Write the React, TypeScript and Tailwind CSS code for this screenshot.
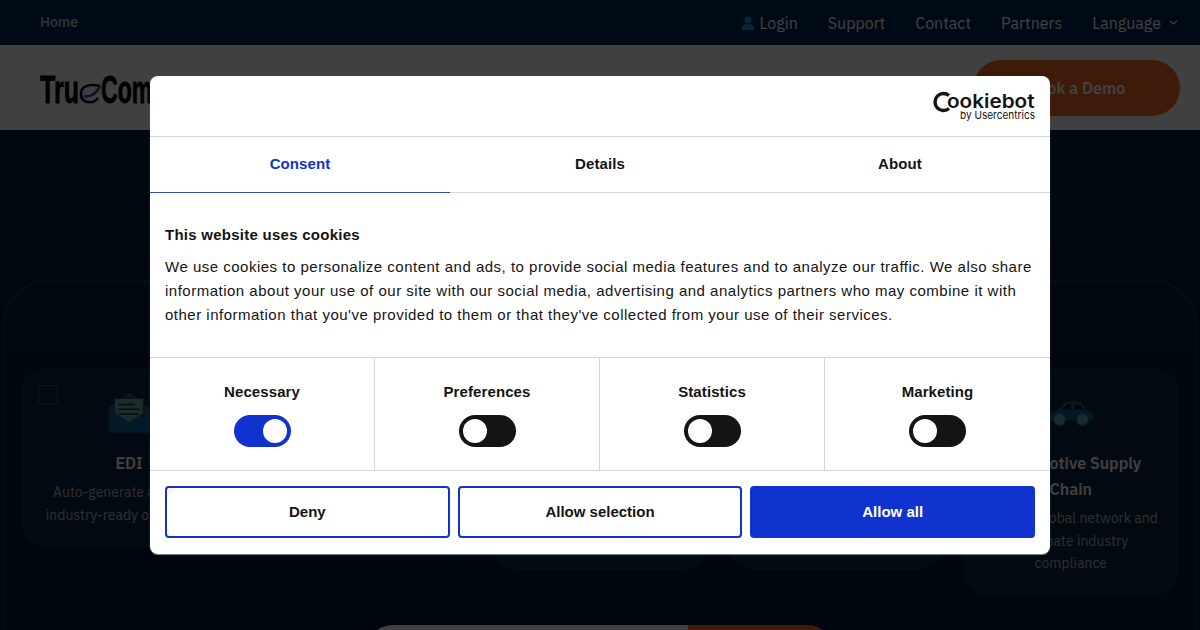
import React from 'react';
import { ChevronDown } from 'lucide-react';

const plex = "font-['IBM_Plex_Sans','Noto_Sans',sans-serif]";

const navLinks = ['Support', 'Contact', 'Partners'];

const cards = [
  {
    title: 'EDI',
    text: ['Auto-generate accurate,', 'industry-ready output files'],
    icon: 'mail',
  },
  {
    title: 'Compliance',
    text: ['Keep every trading partner', 'connected and on track'],
    icon: 'none',
  },
  {
    title: 'Fulfillment',
    text: ['Ship orders faster with', 'connected warehouses', 'and carriers'],
    icon: 'none',
  },
  {
    title: 'Integration',
    text: ['Connect your ERP with', 'every system you rely on', 'each day'],
    icon: 'none',
  },
  {
    title: 'Automotive Supply Chain',
    text: ['Join our global network and', 'automate industry', 'compliance'],
    icon: 'car',
  },
];

const MailIcon = () => (
  <svg width="40" height="40" viewBox="0 0 42 42">
    <path d="M21 0 L29 5 H13 Z" fill="#0a6a9e" />
    <path d="M0 15 L5 11 V20 L21 31 L37 20 V11 L42 15 V40 C42 41 41 42 40 42 H2 C1 42 0 41 0 40 Z" fill="#0a6a9e" />
    <path d="M6 6 H36 V21 L21 31 L6 21 Z" fill="#6fa8ac" />
    <path d="M10 12 H27 M10 17 H32 M10 22 H31" stroke="#1d3b4a" strokeWidth="1.6" />
  </svg>
);

const CarIcon = () => (
  <svg width="46" height="26" viewBox="0 0 48 27">
    <path d="M1 19 C1 14 6 12 10 11 L16 4 C18 2 20 1 25 1 C31 1 34 2 37 6 L40 10 C44 11 47 13 47 16 V21 H1 Z" fill="#0a6a9e" />
    <path d="M15 10 L19 5 C20 4 22 4 24 4 V10 Z M27 4 C30 4 33 5 35 7 L37 10 H27 Z" fill="#000a18" />
    <circle cx="12" cy="20" r="6.5" fill="#6fa8ac" stroke="#0a6a9e" strokeWidth="1.5" />
    <circle cx="36" cy="20" r="6.5" fill="#6fa8ac" stroke="#0a6a9e" strokeWidth="1.5" />
  </svg>
);

const Logo = () => (
  <svg width="170" height="36" viewBox="0 0 170 36">
    <text x="0" y="32.5" fontFamily="Liberation Sans" fontWeight="700" fontSize="39" textLength="39" lengthAdjust="spacingAndGlyphs" stroke="#000" strokeWidth="0.8" fill="#000">Tru</text>
    <path d="M58 28 C54 34 42 34 41 25 C40 17 48 13 60 16" fill="none" stroke="#0b0f20" strokeWidth="2.6" />
    <path d="M44 26 C50 28 57 23 60 16" fill="none" stroke="#1c4fa8" strokeWidth="2.4" />
    <text x="61" y="32.5" fontFamily="Liberation Sans" fontWeight="700" fontSize="39" textLength="72" lengthAdjust="spacingAndGlyphs" stroke="#000" strokeWidth="0.8" fill="#000">Comm</text>
  </svg>
);

const CookiebotLogo = () => (
  <svg width="104" height="34" viewBox="0 0 104 34">
    <path d="M17 5.5 A8.5 8.5 0 1 0 17 18.5" fill="none" stroke="#141414" strokeWidth="3.4" />
    <text x="15" y="17.5" fontFamily="Inter" fontWeight="600" fontSize="19" textLength="87.5" lengthAdjust="spacingAndGlyphs" fill="#141414">ookiebot</text>
    <text x="28" y="28.5" fontFamily="Inter" fontWeight="400" fontSize="11" textLength="75" lengthAdjust="spacingAndGlyphs" fill="#141414">by Usercentrics</text>
  </svg>
);

const Toggle = ({ on }: { on?: boolean }) => (
  <div className={on ? 'flex h-8 w-[57px] items-center justify-end rounded-full bg-[#1032cf] px-1' : 'flex h-8 w-[57px] items-center justify-start rounded-full bg-[#141414] px-1'}>
    <div className="size-6 rounded-full bg-white" />
  </div>
);

const consentOptions = [
  { label: 'Necessary', on: true },
  { label: 'Preferences' },
  { label: 'Statistics' },
  { label: 'Marketing' },
];

const CookieDialog = () => (
  <div className="absolute left-[150px] top-[76px] w-[900px] overflow-hidden rounded-lg bg-white font-['Liberation_Sans',sans-serif] text-[#141414] shadow-[0_1px_1px_rgba(255,255,255,0.5)]">
    <div className="flex h-[61px] items-start justify-end border-b border-[#d6d6d6] pr-[14px] pt-[14px]">
      <CookiebotLogo />
    </div>
    <div className="grid h-[56px] grid-cols-3 border-b border-[#d6d6d6] text-[15px] font-bold tracking-[0.1px]">
      <div className="-mb-px flex items-center justify-center border-b border-[#3049b8] text-[#1032cf]">Consent</div>
      <div className="flex items-center justify-center">Details</div>
      <div className="flex items-center justify-center">About</div>
    </div>
    <div className="h-[164px] px-[15px] pt-[32px]">
      <h2 className="mb-[10px] text-[15px] font-bold leading-[20px] tracking-[0.26px]">This website uses cookies</h2>
      <p className="text-[15px] leading-[24px] tracking-[0.5px]">
        We use cookies to personalize content and ads, to provide social media features and to analyze our traffic. We also share information about your use of our site with our social media, advertising and analytics partners who may combine it with other information that you've provided to them or that they've collected from your use of their services.
      </p>
    </div>
    <div className="grid h-[114px] grid-cols-4 border-y border-[#d6d6d6]">
      {consentOptions.map((option, index) => (
        <div key={option.label} className={index < 3 ? 'flex flex-col items-center border-r border-[#d6d6d6] pt-[25px]' : 'flex flex-col items-center pt-[25px]'}>
          <div className="mb-[14px] text-[15px] font-bold leading-[18px] tracking-[0.1px]">{option.label}</div>
          <Toggle on={option.on} />
        </div>
      ))}
    </div>
    <div className="grid grid-cols-3 gap-2 px-[15px] pb-[16px] pt-[15px] text-[15px] font-bold">
      <button className="h-[52px] rounded-[4px] border-2 border-[#1032cf]">Deny</button>
      <button className="h-[52px] rounded-[4px] border-2 border-[#1032cf]">Allow selection</button>
      <button className="h-[52px] rounded-[4px] border-2 border-[#1032cf] bg-[#1032cf] text-white">Allow all</button>
    </div>
  </div>
);

export default function App() {
  return (
    <div className={`relative h-[630px] overflow-hidden bg-[#001a38] ${plex}`}>
      <div className="flex h-[45px] items-center justify-between bg-[#02285a] pl-10 pr-5 text-white">
        <span className="-mt-[2px] text-sm font-medium text-white/80">Home</span>
        <div className="flex items-center gap-[30px] text-base">
          <span className="flex items-center gap-1">
            <svg width="14" height="14" viewBox="0 0 14 14" fill="#0e9fd8">
              <circle cx="7" cy="4" r="3.6" />
              <path d="M0.5 14 C0.5 9.5 3 8 7 8 C11 8 13.5 9.5 13.5 14 Z" />
            </svg>
            Login
          </span>
          {navLinks.map((link) => (
            <span key={link}>{link}</span>
          ))}
          <span className="flex items-center gap-[6px]">
            Language
            <ChevronDown size={13} strokeWidth={2} />
          </span>
        </div>
      </div>

      <div className="flex h-[85px] items-center justify-between bg-white pl-10 pr-5">
        <Logo />
        <div className="flex h-14 w-[207px] items-center justify-center rounded-full bg-[#f36c21] font-semibold text-white">
          Book a Demo
        </div>
      </div>

      <div className="bg-gradient-to-b from-[#02243f] to-[#001a38] to-[40%] px-[3px] pt-[150px]">
        <section className="h-[500px] rounded-[42px] border-[3px] border-white/[0.07] px-[16px] pt-[85px]">
          <div className="grid grid-cols-5 items-start gap-[21px]">
            {cards.map((card) => (
              <div key={card.title} className="relative flex flex-col items-center rounded-3xl border border-white/5 bg-white/5 px-4 pb-[19px] pt-[23px] text-center">
                {card.title === 'EDI' && <div className="absolute left-[15px] top-[16px] size-5 rounded-[4px] border border-white/20" />}
                <div className="flex h-[42px] items-center">
                  {card.icon === 'mail' && <MailIcon />}
                  {card.icon === 'car' && <CarIcon />}
                </div>
                <h3 className="mt-[16px] text-base font-semibold leading-[26px] text-white">{card.title}</h3>
                <p className="mt-[5px] text-sm leading-[22.5px] text-white/70">
                  {card.text.map((line) => (
                    <span key={line} className="block whitespace-nowrap">{line}</span>
                  ))}
                </p>
              </div>
            ))}
          </div>
          <div className="mx-auto mt-[30px] flex h-14 w-[470px] overflow-hidden rounded-full">
            <div className="w-[323px] bg-white" />
            <div className="flex-1 bg-[#f36c21]" />
          </div>
        </section>
      </div>

      <div className="absolute inset-0 bg-black/75" />
      <CookieDialog />
    </div>
  );
}
